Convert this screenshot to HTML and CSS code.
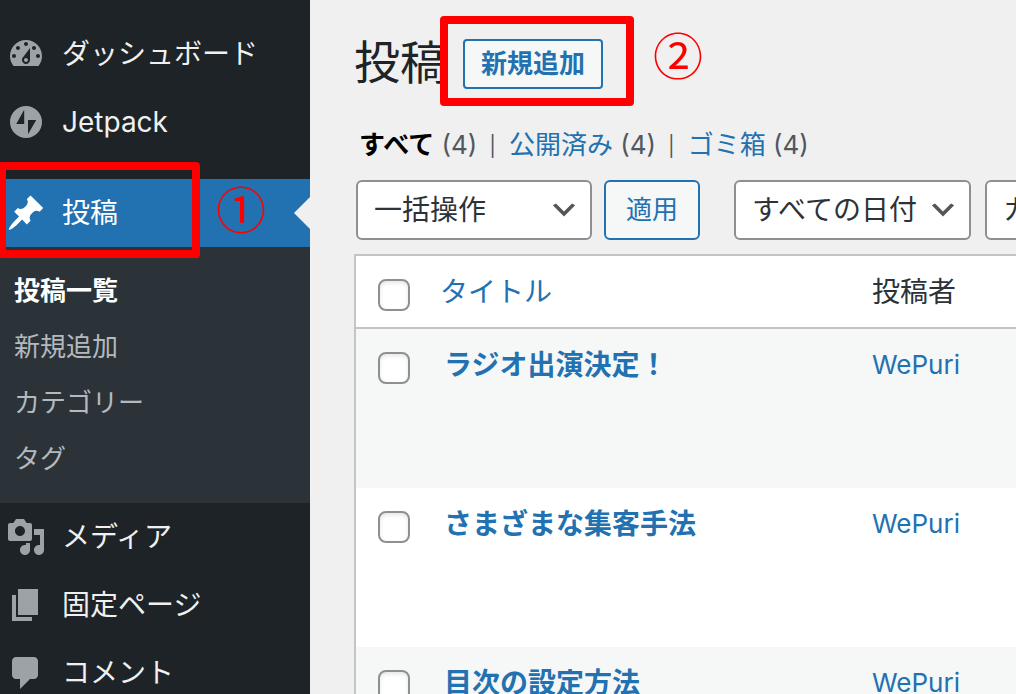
FILE: index.html
```html
<!DOCTYPE html>
<html lang="ja">
<head>
    <meta charset="UTF-8">
    <meta name="viewport" content="width=device-width, initial-scale=1.0">
    <title>投稿</title>
    <link rel="stylesheet" href="styles.css">
</head>
<body>
    <nav id="adminMenu">
        <a class="menu-item" href="#">
            <svg class="icon" viewBox="0 0 20 20"><path d="M3.76 16h12.48c1.1-1.37 1.76-3.11 1.76-5 0-4.42-3.58-8-8-8s-8 3.58-8 8c0 1.89.66 3.63 1.76 5zM10 4c.55 0 1 .45 1 1s-.45 1-1 1-1-.45-1-1 .45-1 1-1zM6 6c.55 0 1 .45 1 1s-.45 1-1 1-1-.45-1-1 .45-1 1-1zm8 0c.55 0 1 .45 1 1s-.45 1-1 1-1-.45-1-1 .45-1 1-1zm-5.37 5.55L12 7v6c0 1.1-.9 2-2 2s-2-.9-2-2c0-.57.24-1.08.63-1.45zM4 10c.55 0 1 .45 1 1s-.45 1-1 1-1-.45-1-1 .45-1 1-1zm12 0c.55 0 1 .45 1 1s-.45 1-1 1-1-.45-1-1 .45-1 1-1zm-5 3c0-.55-.45-1-1-1s-1 .45-1 1 .45 1 1 1 1-.45 1-1z"/></svg>
            <span>ダッシュボード</span>
        </a>
        <a class="menu-item" href="#">
            <svg class="icon" viewBox="-4 -4 40 40"><path fill-rule="evenodd" d="M16 0a16 16 0 1 0 0 32 16 16 0 0 0 0-32zM14.2 17.9H6.2L14.2 3.8zM18 28.2V14h8.2z"/></svg>
            <span>Jetpack</span>
        </a>
        <div class="menu-current">
            <a class="menu-item current" href="#">
                <svg class="icon" viewBox="0 0 20 20"><path d="M10.44 3.02l1.82-1.82 6.36 6.35-1.83 1.82c-1.05-.68-2.48-.57-3.41.36l-.75.75c-.92.93-1.04 2.35-.35 3.41l-1.83 1.82-2.41-2.41-2.8 2.79c-.42.42-3.38 2.71-3.8 2.29s1.86-3.39 2.28-3.81l2.79-2.79L4.1 9.36l1.83-1.82c1.05.69 2.48.57 3.4-.36l.75-.75c.93-.92 1.05-2.35.36-3.41z"/></svg>
                <span>投稿</span>
            </a>
            <div class="marker marker-menu"></div>
            <span class="step step-menu">①</span>
        </div>
        <ul class="submenu">
            <li><a class="active" href="#">投稿一覧</a></li>
            <li><a href="#">新規追加</a></li>
            <li><a href="#">カテゴリー</a></li>
            <li><a href="#">タグ</a></li>
        </ul>
        <a class="menu-item" href="#">
            <svg class="icon" viewBox="0 0 20 20"><path d="M13 11V4c0-.55-.45-1-1-1h-1.67L9 1H5L3.67 3H2c-.55 0-1 .45-1 1v7c0 .55.45 1 1 1h10c.55 0 1-.45 1-1zM7 4.5c1.38 0 2.5 1.12 2.5 2.5S8.38 9.5 7 9.5 4.5 8.38 4.5 7 5.62 4.5 7 4.5zM14 6h5v10.5c0 1.38-1.12 2.5-2.5 2.5S14 17.88 14 16.5s1.12-2.5 2.5-2.5c.17 0 .34.02.5.05V9h-3V6zm-4 8.05V13h2v3.5c0 1.38-1.12 2.5-2.5 2.5S7 17.88 7 16.5 8.12 14 9.5 14c.17 0 .34.02.5.05z"/></svg>
            <span>メディア</span>
        </a>
        <a class="menu-item" href="#">
            <svg class="icon" viewBox="0 0 20 20"><path d="M6 15V2h10v13H6zm-1 1h8v2H3V5h2v11z"/></svg>
            <span>固定ページ</span>
        </a>
        <a class="menu-item" href="#">
            <svg class="icon" viewBox="0 0 20 20"><path d="M5 2h9c1.1 0 2 .9 2 2v7c0 1.1-.9 2-2 2h-2l-5 5v-5H5c-1.1 0-2-.9-2-2V4c0-1.1.9-2 2-2z"/></svg>
            <span>コメント</span>
        </a>
    </nav>

    <main id="content">
        <header class="page-head">
            <h1>投稿</h1>
            <div class="add-new">
                <button type="button" class="button button-title">新規追加</button>
                <div class="marker marker-add"></div>
            </div>
            <span class="step">②</span>
        </header>

        <ul class="status-links">
            <li><a class="active" href="#">すべて</a> (4)</li>
            <li><a href="#">公開済み</a> (4)</li>
            <li><a href="#">ゴミ箱</a> (4)</li>
        </ul>

        <div class="filters">
            <select aria-label="一括操作">
                <option>一括操作</option>
            </select>
            <button type="button" class="button button-apply">適用</button>
            <select aria-label="日付で絞り込む">
                <option>すべての日付</option>
            </select>
            <select aria-label="カテゴリーで絞り込む">
                <option>カテゴリー一覧</option>
            </select>
        </div>

        <table>
            <thead>
                <tr>
                    <th class="col-check"><input type="checkbox" aria-label="すべて選択"></th>
                    <th class="col-title"><a href="#">タイトル</a></th>
                    <th class="col-author">投稿者</th>
                </tr>
            </thead>
            <tbody>
                <tr>
                    <td class="col-check"><input type="checkbox" aria-label="ラジオ出演決定！を選択"></td>
                    <td class="col-title"><a href="#">ラジオ出演決定！</a></td>
                    <td class="col-author"><a href="#">WePuri</a></td>
                </tr>
                <tr>
                    <td class="col-check"><input type="checkbox" aria-label="さまざまな集客手法を選択"></td>
                    <td class="col-title"><a href="#">さまざまな集客手法</a></td>
                    <td class="col-author"><a href="#">WePuri</a></td>
                </tr>
                <tr>
                    <td class="col-check"><input type="checkbox" aria-label="目次の設定方法を選択"></td>
                    <td class="col-title"><a href="#">目次の設定方法</a></td>
                    <td class="col-author"><a href="#">WePuri</a></td>
                </tr>
            </tbody>
        </table>
    </main>
</body>
</html>
```
FILE: styles.css
```css
* {
    box-sizing: border-box;
}

body {
    margin: 0;
    display: flex;
    height: 100vh;
    overflow: hidden;
    background-color: #f0f0f0;
    color: #2c3338;
    font-family: Inter, "Noto Sans CJK JP", sans-serif;
    font-size: 26px;
    line-height: 40px;
}

a {
    color: #2271b1;
    text-decoration: none;
}

ul {
    list-style: none;
    margin: 0;
    padding: 0;
}

/* Sidebar */
#adminMenu {
    flex: 0 0 310px;
    padding-top: 20px;
    background-color: #1d2327;
}

.menu-item {
    display: flex;
    align-items: center;
    gap: 16px;
    height: 68px;
    padding-left: 6px;
    color: #f0f0f1;
    font-size: 28px;
}

.icon {
    width: 40px;
    height: 40px;
    fill: #9ca2a7;
}

.menu-current {
    position: relative;
    margin-top: 23px;
}

.menu-item.current {
    background-color: #2271b1;
    color: #fff;
}

.current .icon {
    fill: #fff;
}

.menu-current::after {
    content: "";
    position: absolute;
    top: 18px;
    right: 0;
    border: 16px solid transparent;
    border-left-width: 0;
    border-right-color: #f0f0f0;
}

.submenu {
    padding: 16px 0;
    background-color: #2c3338;
}

.submenu a {
    display: block;
    padding: 8px 14px;
    color: #b4b9be;
}

.submenu .active {
    color: #fff;
    font-weight: 700;
}

/* Red step markers */
.marker {
    position: absolute;
    border: 8px solid #f00;
    border-radius: 4px;
    pointer-events: none;
}

.marker-menu {
    top: -17px;
    left: -2px;
    width: 202px;
    height: 96px;
}

.marker-add {
    top: -23px;
    left: -23px;
    width: 194px;
    height: 90px;
}

.step {
    color: #f00;
    font-family: "Noto Sans CJK JP", sans-serif;
    font-size: 50px;
    line-height: 50px;
}

.step-menu {
    position: absolute;
    top: 3px;
    left: 216px;
}

/* Content */
#content {
    flex: 1;
    min-width: 0;
    padding: 32px 0 0 44px;
    overflow: hidden;
}

.page-head {
    display: flex;
    align-items: center;
    height: 64px;
}

h1 {
    margin: 0 17px 0 0;
    padding-bottom: 4px;
    color: #1d2327;
    font-size: 46px;
    font-weight: 400;
}

.add-new {
    position: relative;
    display: flex;
    margin-right: 50px;
}

.page-head .step {
    padding-bottom: 22px;
}

.button {
    flex: none;
    border: 2px solid #2271b1;
    border-radius: 6px;
    background-color: #f6f7f7;
    color: #2271b1;
    font: inherit;
    cursor: pointer;
}

.button-title {
    height: 50px;
    padding: 0 16px;
    border-radius: 4px;
    font-weight: 700;
    line-height: 46px;
}

.button-apply {
    padding: 0 20px;
    margin-right: 22px;
}

.status-links {
    display: flex;
    height: 40px;
    margin: 29px 0 15px 5px;
    color: #50575e;
}

.status-links li + li::before {
    content: "|";
    margin: 0 13px 0 12px;
    font-size: 20px;
    vertical-align: 1px;
}

.status-links .active {
    color: #000;
    font-weight: 700;
}

.filters {
    display: flex;
    gap: 12px;
    height: 60px;
    margin: 0 0 14px 2px;
}

select {
    flex: 0 0 236px;
    padding: 0 48px 0 16px;
    border: 2px solid #8c8f94;
    border-radius: 6px;
    appearance: none;
    background: #fff url("data:image/svg+xml,%3Csvg xmlns='http://www.w3.org/2000/svg' viewBox='0 0 20 20'%3E%3Cpath d='M5 6l5 5 5-5 2 1-7 7-7-7 2-1z' fill='%23555'/%3E%3C/svg%3E") no-repeat right 10px center / 32px 32px;
    color: #2c3338;
    font: inherit;
    font-size: 28px;
}

select + select {
    margin-left: 2px;
}

/* Posts table */
table {
    width: 100%;
    border: 2px solid #c3c4c7;
    border-right: 0;
    border-spacing: 0;
    table-layout: fixed;
    background-color: #fff;
}

th, td {
    height: 159px;
    padding: 16px 0 0;
    text-align: left;
    vertical-align: top;
    font-weight: 400;
}

th {
    height: 73px;
    border-bottom: 2px solid #c3c4c7;
    font-size: 28px;
}

tbody tr:nth-child(odd) {
    background-color: #f6f7f7;
}

.col-check {
    width: 84px;
    padding: 23px 0 0 22px;
    line-height: 0;
}

td.col-title {
    padding-left: 4px;
    font-size: 28px;
    font-weight: 700;
}

.col-author {
    width: 144px;
}

input[type="checkbox"] {
    width: 32px;
    height: 32px;
    margin: 0;
    border: 2px solid #8c8f94;
    border-radius: 8px;
    appearance: none;
    background-color: #fff;
    box-shadow: inset 0 2px 4px rgba(0, 0, 0, 0.1);
}
```
